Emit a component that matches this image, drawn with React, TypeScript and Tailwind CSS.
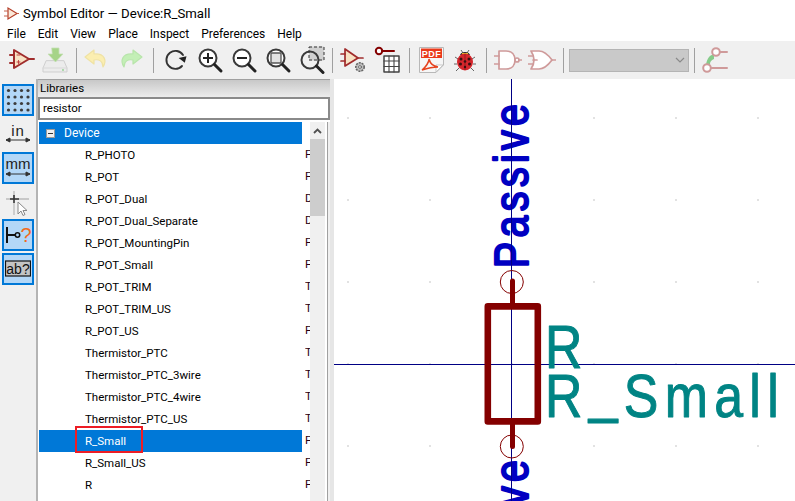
const menus = ["File", "Edit", "View", "Place", "Inspect", "Preferences", "Help"];

const symbols: [string, string][] = [
  ["R_PHOTO", "F"],
  ["R_POT", "F"],
  ["R_POT_Dual", "D"],
  ["R_POT_Dual_Separate", "D"],
  ["R_POT_MountingPin", "F"],
  ["R_POT_Small", "F"],
  ["R_POT_TRIM", "T"],
  ["R_POT_TRIM_US", "T"],
  ["R_POT_US", "F"],
  ["Thermistor_PTC", "T"],
  ["Thermistor_PTC_3wire", "T"],
  ["Thermistor_PTC_4wire", "T"],
  ["Thermistor_PTC_US", "T"],
  ["R_Small", "F"],
  ["R_Small_US", "F"],
  ["R", "F"],
];

function Sep({ className }: { className: string }) {
  return <div className={`w-px h-[25px] bg-[#a0a0a0] shrink-0 ${className}`} />;
}

function Slot({ className = "", children }: { className?: string; children: React.ReactNode }) {
  return <div className={`w-[34px] h-[30px] flex items-center justify-center shrink-0 ${className}`}>{children}</div>;
}

function Ico({ children }: { children: React.ReactNode }) {
  return (
    <svg width="28" height="28" viewBox="0 0 28 28" fill="none" strokeLinecap="round" strokeLinejoin="round">
      {children}
    </svg>
  );
}

function SymbolGlyph() {
  return (
    <>
      <path d="M7 4 L7 22 L22 13 Z" fill="#f8e2c4" stroke="#a02c2c" strokeWidth="2" />
      <path d="M22 13 H27 M3 9 H7 M3 17 H7" stroke="#a02c2c" strokeWidth="2" />
      <path d="M10 9 H13 M10 16 H13 M11.5 14.5 V17.5" stroke="#c04040" strokeWidth="1" />
    </>
  );
}

function Magnifier({ children }: { children?: React.ReactNode }) {
  return (
    <Ico>
      <circle cx="12" cy="12" r="8.5" stroke="#3a3a3a" strokeWidth="2" fill="#fff" />
      <path d="M18.5 18.5 L25 25" stroke="#222" strokeWidth="3" />
      {children}
    </Ico>
  );
}

function Gate({ or }: { or?: boolean }) {
  return (
    <svg width="28" height="24" viewBox="0 0 28 24" fill="#fff" stroke="#cf9a9a" strokeWidth="1.7" strokeLinecap="round" strokeLinejoin="round">
      {or ? (
        <>
          <path d="M3 3 H11 C17 3 21 8 24 12 C21 16 17 21 11 21 H3 C7 15 7 9 3 3 Z" />
          <path d="M0 8 H5 M0 16 H5 M24 12 H28 M5 12 H9" />
        </>
      ) : (
        <>
          <path d="M5 3 H12 C18 3 21 7 21 12 C21 17 18 21 12 21 H5 Z" />
          <circle cx="23" cy="12" r="2" />
          <path d="M0 8 H5 M0 16 H5 M25 12 H28" />
        </>
      )}
    </svg>
  );
}

function TopToolbar() {
  return (
    <div className="h-[38px] bg-[#f0f0f0] flex items-center pl-[4px] shrink-0">
      <Slot>
        <Ico><SymbolGlyph /></Ico>
      </Slot>
      <Slot>
        <Ico>
          <path d="M5 15 L2 22 V26 H26 V22 L23 15 Z" fill="#ececec" stroke="#cfcfcf" strokeWidth="1" />
          <path d="M2 22 H26" stroke="#d8d8d8" />
          <circle cx="22" cy="24" r="0.9" fill="#8fd08f" />
          <path d="M11 2 H18 V8 H22 L14.5 16 L7 8 H11 Z" fill="#a6d488" stroke="#c5dfb5" strokeWidth="0.8" />
        </Ico>
      </Slot>
      <Sep className="ml-[4px]" />
      <Slot className="ml-[2px]">
        <Ico>
          <path d="M12 4 L3 11 L12 18 V14 C17 13 21 15 21 21 C25 15 23 7 12 8 Z" fill="#fbeeb0" stroke="#efe2a4" strokeWidth="1.2" />
        </Ico>
      </Slot>
      <Slot>
        <Ico>
          <path d="M17 4 L26 11 L17 18 V14 C12 13 8 15 8 21 C4 15 6 7 17 8 Z" fill="#c3efb6" stroke="#b8e5ab" strokeWidth="1.2" />
        </Ico>
      </Slot>
      <Sep className="ml-[6px]" />
      <Slot className="ml-[5px]">
        <Ico>
          <path d="M21 9 A9 9 0 1 0 20 20" stroke="#333" strokeWidth="1.9" />
          <path d="M17 11 L25 11 L22 17 Z" fill="#222" transform="rotate(-12 21 13)" />
        </Ico>
      </Slot>
      <Slot>
        <Magnifier>
          <path d="M7 12 H17 M12 7 V17" stroke="#222" strokeWidth="2" strokeLinecap="butt" />
        </Magnifier>
      </Slot>
      <Slot>
        <Magnifier>
          <path d="M7 12 H17" stroke="#222" strokeWidth="2" strokeLinecap="butt" />
        </Magnifier>
      </Slot>
      <Slot>
        <Magnifier>
          <rect x="7" y="7" width="10" height="10" fill="#e2e2e2" stroke="#555" strokeWidth="1.3" />
        </Magnifier>
      </Slot>
      <Slot>
        <Ico>
          <rect x="11" y="0.5" width="15" height="14" fill="#d0d0d0" />
          <circle cx="12" cy="14" r="8.5" stroke="#3a3a3a" strokeWidth="2" />
          <path d="M18.5 20 L25 26.5" stroke="#222" strokeWidth="3" />
          <rect x="11" y="1" width="15" height="13" stroke="#333" strokeWidth="1" strokeDasharray="3 2" strokeLinecap="butt" />
        </Ico>
      </Slot>
      <Sep className="ml-[3px]" />
      <Slot className="ml-[4px]">
        <Ico>
          <path d="M5 3 L5 20 L18 12 Z" fill="#f8e2c4" stroke="#a02c2c" strokeWidth="1.7" />
          <path d="M18 12 H23 M1 8 H5 M1 15 H5" stroke="#a02c2c" strokeWidth="1.7" />
          <circle cx="20" cy="21" r="4.2" fill="#bdbdbd" stroke="#666" strokeWidth="1.6" strokeDasharray="2 1" strokeLinecap="butt" />
          <circle cx="20" cy="21" r="1.4" fill="#fff" stroke="#555" strokeWidth="0.8" />
        </Ico>
      </Slot>
      <Slot>
        <Ico>
          <circle cx="5" cy="5" r="3.2" fill="#fff" stroke="#840000" strokeWidth="2" />
          <path d="M8.5 5 H20" stroke="#840000" strokeWidth="2" />
          <rect x="10" y="10" width="15" height="16" fill="#fff" stroke="#444" strokeWidth="1.5" strokeLinecap="butt" />
          <path d="M10 15 H25 M10 20.5 H25 M15 10 V26 M20 10 V26" stroke="#444" strokeWidth="1.1" />
        </Ico>
      </Slot>
      <Sep className="ml-[4px]" />
      <Slot className="ml-[4px]">
        <svg width="25" height="26" viewBox="0 0 25 26" fill="none">
          <path d="M0.5 0.5 H24.5 V18 L17 25.5 H0.5 Z" fill="#f6f6f6" stroke="#b8b8b8" />
          <path d="M17 25 V18 H24 Z" fill="#fff" stroke="#bbb" strokeWidth="0.8" />
          <rect x="2" y="1.5" width="21" height="9.5" fill="#ea3a1c" />
          <text x="12.5" y="9.5" textAnchor="middle" fill="#fff" className="font-['Liberation_Sans'] text-[9px] font-bold" letterSpacing="0.5">PDF</text>
          <path d="M3 23 C7 20 10 15 10 12 C11 16 13 19 19 20 C14 20 9 21 3 23 Z" stroke="#e6431f" strokeWidth="1.5" />
        </svg>
      </Slot>
      <Slot>
        <svg width="22" height="24" viewBox="0 0 22 24" fill="none">
          <path d="M7 2 L9 5 M15 2 L13 5 M4 11 L1 9 M18 11 L21 9 M3 16 H0 M19 16 H22 M5 20 L2 23 M17 20 L20 23" stroke="#666" strokeWidth="1" />
          <path d="M6 7 C7 3 15 3 16 7 Z" fill="#222" />
          <path d="M8 5 H14 V6.5 H8 Z" fill="#e6d22c" />
          <ellipse cx="11" cy="14" rx="8" ry="8.5" fill="#d5262c" />
          <path d="M11 6 V22" stroke="#7a1a1a" strokeWidth="0.7" />
          <circle cx="7" cy="11" r="1.5" fill="#3a1010" />
          <circle cx="15" cy="11" r="1.5" fill="#3a1010" />
          <circle cx="6.5" cy="16" r="1.5" fill="#3a1010" />
          <circle cx="15.5" cy="16" r="1.5" fill="#3a1010" />
          <circle cx="11" cy="13.5" r="1.3" fill="#3a1010" />
          <circle cx="11" cy="19" r="1.2" fill="#3a1010" />
        </svg>
      </Slot>
      <Sep className="ml-[4px]" />
      <Slot className="ml-[4px]"><Gate /></Slot>
      <Slot><Gate or /></Slot>
      <Sep className="ml-[4px]" />
      <div className="ml-[5px] w-[120px] h-[23px] bg-[#c9c9c9] border border-[#b4b4b4] flex items-center justify-end pr-[3px] shrink-0">
        <svg width="10" height="6" viewBox="0 0 10 6" fill="none">
          <path d="M1 1 L5 5 L9 1" stroke="#8a8a8a" strokeWidth="1.2" />
        </svg>
      </div>
      <Sep className="ml-[5px]" />
      <Slot className="ml-[4px]">
        <Ico>
          <path d="M4 19 C5 12 8 9 12 8 L12 13 C9 14 8 16 8 18 Z" fill="#86cc8a" />
          <circle cx="14" cy="6" r="3.8" fill="#fff" stroke="#cf9a9a" strokeWidth="2" />
          <circle cx="5" cy="22" r="3.8" fill="#fff" stroke="#cf9a9a" strokeWidth="2" />
          <path d="M18 6 H25 M9 22 H25" stroke="#cf9a9a" strokeWidth="2" />
        </Ico>
      </Slot>
    </div>
  );
}

function SideBtn({ active, className = "", children }: { active?: boolean; className?: string; children: React.ReactNode }) {
  return (
    <div className={`w-[32px] ml-[2px] flex items-center justify-center ${active ? "bg-[#b3d7f7] border-2 border-[#0078d7]" : ""} ${className}`}>
      {children}
    </div>
  );
}

function LeftToolbar() {
  return (
    <div className="w-[36px] shrink-0 bg-[#f0f0f0] pt-[5px] flex flex-col">
      <SideBtn active className="h-[32px]">
        <svg width="24" height="24" viewBox="0 0 24 24" fill="#3c3c3c">
          {[2.5, 9, 15.5, 22].flatMap((y) => [2.5, 9, 15.5, 22].map((x) => <circle key={`${x}-${y}`} cx={x} cy={y} r="1.6" />))}
        </svg>
      </SideBtn>
      <SideBtn className="h-[30px] mt-[4px]">
        <svg width="26" height="28" viewBox="0 0 26 28" fill="none">
          <text x="13" y="15" textAnchor="middle" fill="#222" letterSpacing="1" className="font-['Liberation_Sans'] text-[15px]">in</text>
          <path d="M1 19 H25 M1 19 L5 17 V21 Z M25 19 L21 17 V21 Z" stroke="#333" strokeWidth="1" fill="#333" />
        </svg>
      </SideBtn>
      <SideBtn active className="h-[32px] mt-[2px]">
        <svg width="26" height="28" viewBox="0 0 26 28" fill="none">
          <text x="13" y="15" textAnchor="middle" fill="#222" className="font-['Liberation_Sans'] text-[15px]">mm</text>
          <path d="M1 20 H25 M1 20 L5 18 V22 Z M25 20 L21 18 V22 Z" stroke="#333" strokeWidth="1" fill="#333" />
        </svg>
      </SideBtn>
      <SideBtn className="h-[30px] mt-[4px]">
        <svg width="26" height="26" viewBox="0 0 26 26" fill="none">
          <path d="M1 9 H24 M9 1 V8 M9 13 V25" stroke="#bbb" strokeWidth="1.3" />
          <path d="M5 9 H14 M9 5 V13" stroke="#333" strokeWidth="1.6" />
          <path d="M13 12 V24 L16 21 L18 25.5 L20 24.5 L18 20.5 L22 20.5 Z" fill="#fff" stroke="#888" strokeWidth="1" />
        </svg>
      </SideBtn>
      <SideBtn active className="h-[32px] mt-[1px]">
        <svg width="28" height="24" viewBox="0 0 28 24" fill="none">
          <path d="M3 4 V20 M3 12 H11" stroke="#111" strokeWidth="2" />
          <circle cx="13.5" cy="12" r="2.2" stroke="#111" strokeWidth="1.5" />
          <text x="22" y="19" textAnchor="middle" fill="#f26a1b" className="font-['Liberation_Sans'] text-[20px]">?</text>
        </svg>
      </SideBtn>
      <SideBtn active className="h-[32px] mt-[2px]">
        <svg width="26" height="20" viewBox="0 0 26 20" fill="none">
          <rect x="0.5" y="2" width="25" height="15" fill="#c4c4c4" stroke="#111" strokeWidth="1.2" />
          <text x="13" y="14.5" textAnchor="middle" fill="#111" className="font-['Liberation_Sans'] text-[14px]">ab?</text>
        </svg>
      </SideBtn>
    </div>
  );
}

function LibraryPanel() {
  return (
    <div className="w-[294px] shrink-0 border-l-2 border-[#b4b4b4] flex flex-col bg-white">
      <div className="h-[18px] bg-gradient-to-b from-[#c8c8c8] to-[#ececec] border-t border-[#a0a0a0] pl-[2px] text-[11.5px] leading-[16px] text-black">Libraries</div>
      <div className="h-[23px] border-2 border-[#8a8a8a] pl-[3px] text-[11.5px] leading-[18px] text-black bg-white">resistor</div>
      <div className="flex flex-1 pt-[2px] pl-px min-h-0">
        <div className="w-[271px] shrink-0">
          <div className="h-[22px] w-[263px] bg-[#0078d7] text-white flex items-center text-[12px]">
            <div className="w-[9px] h-[9px] ml-[7px] bg-[#f0f0f0] border border-[#9a9a9a] flex items-center justify-center">
              <div className="w-[5px] h-px bg-[#333]" />
            </div>
            <span className="ml-[9px]">Device</span>
          </div>
          {symbols.map(([name, desc]) => {
            const selected = name === "R_Small";
            return (
              <div key={name} className="h-[22px] flex items-center text-[11.5px] text-black">
                <div className={`w-[263px] h-full flex items-center pl-[46px] pt-[2px] relative ${selected ? "bg-[#0078d7] text-white" : ""}`}>
                  {name}
                  {selected && <div className="absolute left-[36px] top-[-4px] w-[68px] h-[27px] border-2 border-[#ed1c24]" />}
                </div>
                <div className="ml-[3px] w-[5px] overflow-hidden text-[#2a0010]">{desc}</div>
              </div>
            );
          })}
        </div>
        <div className="w-[15px] h-full bg-[#f0f0f0] shrink-0">
          <div className="h-[17px] flex items-center justify-center">
            <svg width="9" height="6" viewBox="0 0 9 6" fill="none">
              <path d="M1 5 L4.5 1.5 L8 5" stroke="#505050" strokeWidth="1.8" />
            </svg>
          </div>
          <div className="h-[77px] bg-[#cdcdcd]" />
        </div>
        <div className="w-[3px] shrink-0 border-l border-[#a0a0a0] ml-[2px] bg-[#f0f0f0]" />
      </div>
    </div>
  );
}

function Canvas() {
  const dots: [number, number][] = [];
  for (const x of [348, 430, 512, 594, 676, 758]) {
    for (const y of [118, 200, 282, 364, 446]) dots.push([x, y]);
  }
  return (
    <div className="flex-1 bg-white border-l-[4px] border-[#e6e6e6] min-w-0">
      <svg width="461" height="422" viewBox="334 79 461 422" fill="none" className="block">
        {dots.map(([x, y]) => (
          <rect key={`${x}-${y}`} x={x - 0.5} y={y - 0.5} width="1" height="1" fill="#8a8a8a" />
        ))}
        <g stroke="#0000c2" fill="#0000c2" strokeWidth="2.2" strokeLinejoin="round" className="font-['Liberation_Sans'] text-[48px]">
          <text transform="translate(527.5 268) rotate(-90) scale(0.82 1)" textLength="200" lengthAdjust="spacing">Passive</text>
          <text transform="translate(527.5 624) rotate(-90) scale(0.82 1)" textLength="200" lengthAdjust="spacing">Passive</text>
        </g>
        <path d="M334 364.5 H795 M511.5 79 V501" stroke="#000084" strokeWidth="1" />
        <circle cx="511.8" cy="282" r="11.5" stroke="#840000" strokeWidth="1" />
        <circle cx="511.8" cy="446.5" r="11.5" stroke="#840000" strokeWidth="1" />
        <path d="M512.5 281 V304 M512.5 424 V446.5" stroke="#840000" strokeWidth="5" strokeLinecap="round" />
        <rect x="487.8" y="306.4" width="50" height="115" stroke="#840000" strokeWidth="6.6" strokeLinejoin="round" />
        <g fill="#008484" stroke="#008484" strokeWidth="1" strokeLinejoin="round" className="font-['Liberation_Sans'] text-[61px]">
          <text transform="translate(545 368) scale(0.85 1)">R</text>
          <text transform="translate(545 417) scale(0.85 1)" letterSpacing="7.4">
            R<tspan dy="-6">_</tspan>
            <tspan dy="6">Small</tspan>
          </text>
        </g>
      </svg>
    </div>
  );
}

export default function App() {
  return (
    <div className="w-[795px] h-[501px] overflow-hidden bg-white flex flex-col font-['Roboto','Noto_Sans',sans-serif] text-black">
      <div className="h-[27px] flex items-center shrink-0">
        <svg width="16" height="16" viewBox="0 0 16 16" fill="none" className="ml-[3px]">
          <path d="M5 2 L5 13 L14 7.5 Z" fill="#fbe8d8" stroke="#b5402a" strokeWidth="1.2" />
          <path d="M1 5 H5 M1 10 H5 M14 7.5 H16" stroke="#c4604a" strokeWidth="1" />
        </svg>
        <span className="ml-[4px] text-[13.2px]">Symbol Editor — Device:R_Small</span>
      </div>
      <div className="h-[14px] flex items-center pl-[7px] gap-[12px] text-[12px] shrink-0">
        {menus.map((m) => (
          <span key={m}>{m}</span>
        ))}
      </div>
      <TopToolbar />
      <div className="flex flex-1 min-h-0">
        <LeftToolbar />
        <LibraryPanel />
        <Canvas />
      </div>
    </div>
  );
}
